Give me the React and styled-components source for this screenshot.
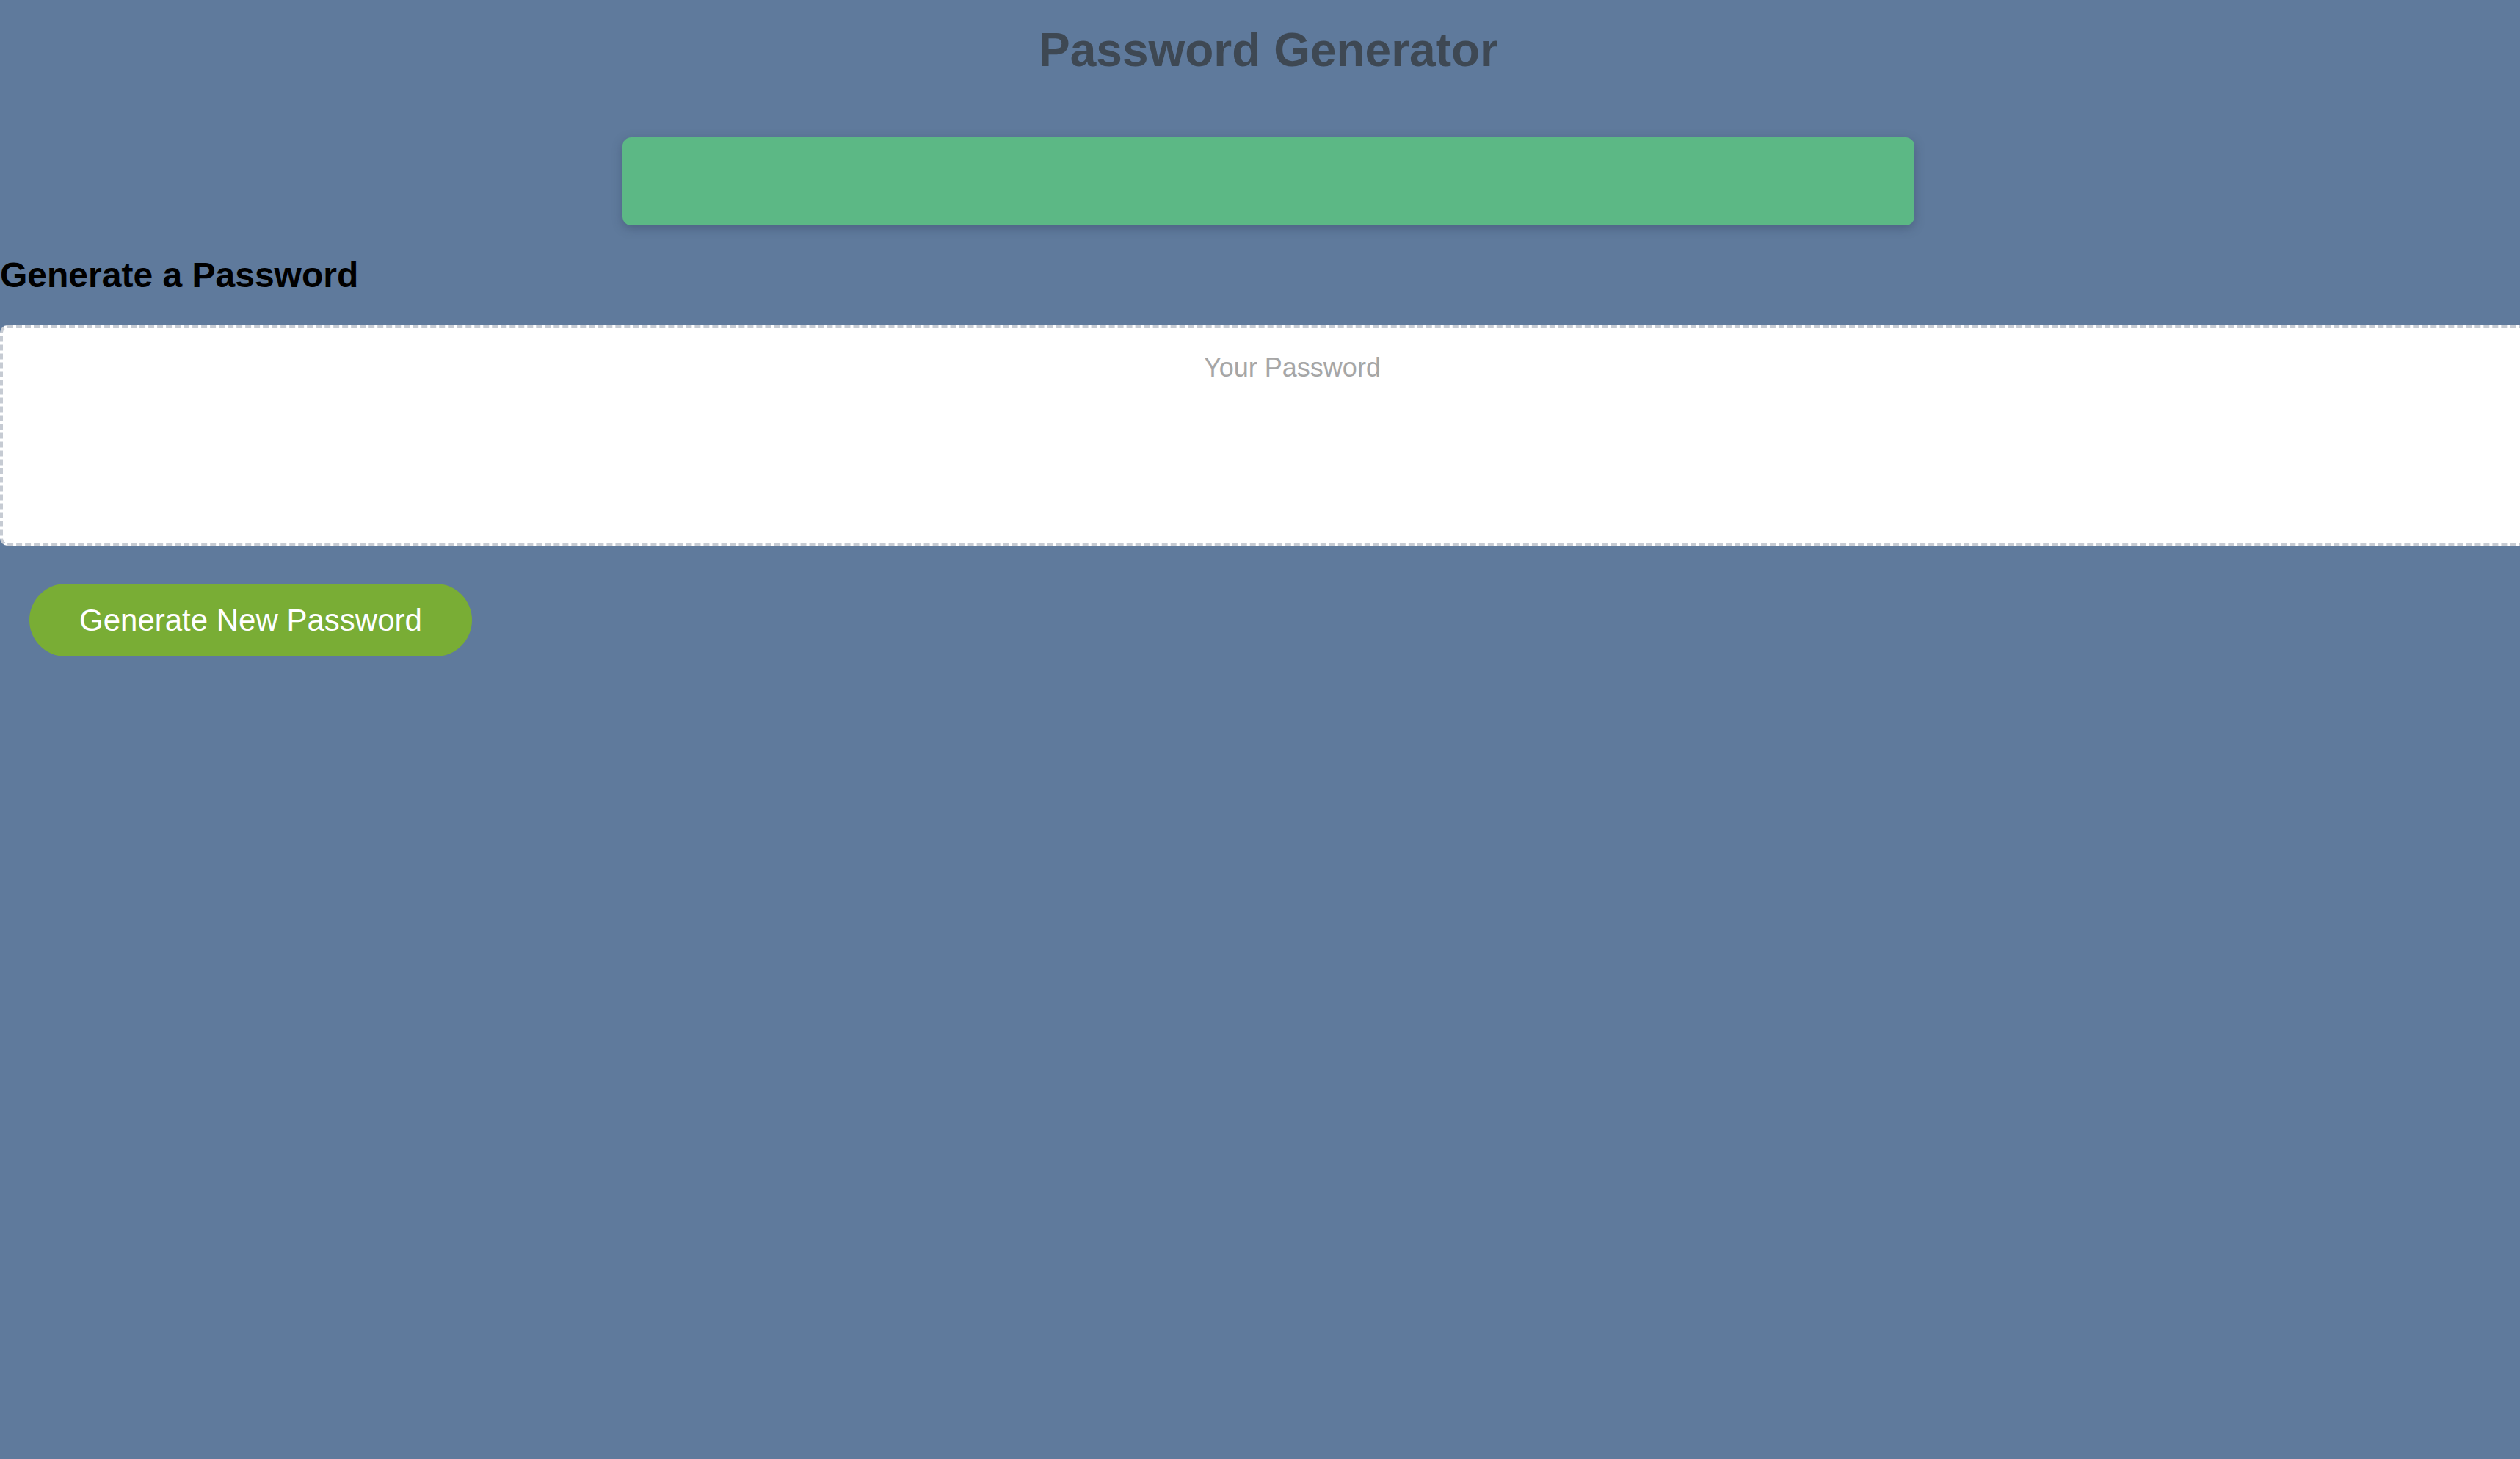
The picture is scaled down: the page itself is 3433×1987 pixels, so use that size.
import React from 'react';
import styled, { createGlobalStyle } from 'styled-components';

const GlobalStyle = createGlobalStyle`
  html, body {
    margin: 0;
    padding: 0;
    background: #5f7a9c;
    overflow-x: hidden;
    font-family: "Liberation Sans", Arial, Helvetica, sans-serif;
  }
`

const Page = styled.div`
  min-height: 1987px;
  background: #5f7a9c;
`

const Top = styled.header`
  display: flex;
  flex-direction: column;
  align-items: center;
  padding: 31px 0 0 23px;
`

const Title = styled.h1`
  margin: 0;
  font-size: 64px;
  font-weight: 700;
  color: #3e4853;
`

const Banner = styled.div`
  margin-top: 82px;
  width: 1760px;
  height: 120px;
  border-radius: 12px;
  background: #5cb885;
  box-shadow: 0 4px 14px rgba(40, 55, 80, 0.35);
`

const Heading = styled.h2`
  margin: 40px 0 0;
  font-size: 48px;
  font-weight: 700;
  color: #000;
`

const Output = styled.textarea`
  display: block;
  box-sizing: border-box;
  margin-top: 41px;
  width: calc(100% + 88px);
  height: 300px;
  padding: 33px 40px;
  border: 4px dashed #c6cbd3;
  border-radius: 10px;
  background: #fff;
  resize: none;
  text-align: center;
  font-family: "Liberation Sans", Arial, sans-serif;
  font-size: 36px;
  color: #333;

  &::placeholder {
    color: #a6a6a6;
  }
`

const Actions = styled.div`
  display: flex;
  padding: 52px 40px 0;
`

const Button = styled.button`
  height: 99px;
  padding: 0 68px;
  border: 0;
  border-radius: 50px;
  background: ${(props) => props.bg || '#79ad35'};
  color: #fff;
  font-family: "Liberation Sans", Arial, sans-serif;
  font-size: 42px;
  cursor: pointer;
`

const App = () => {
  return (
    <Page>
      <GlobalStyle />
      <Top>
        <Title>Password Generator</Title>
        <Banner />
      </Top>
      <Heading>Generate a Password</Heading>
      <Output placeholder="Your Password" readOnly />
      <Actions>
        <Button>Generate New Password</Button>
      </Actions>
    </Page>
  )
}

export default App
